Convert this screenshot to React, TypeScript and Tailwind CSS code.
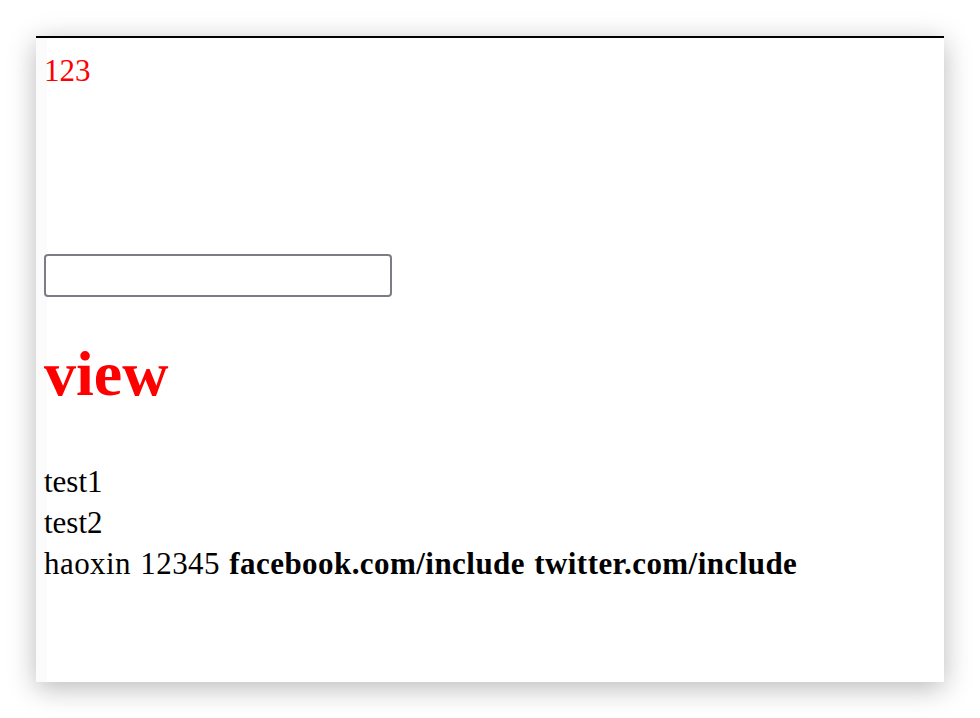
export default function App() {
  return (
    <div className="w-[980px] h-[718px] bg-white pl-[36px] pt-[36px] font-['Liberation_Serif',serif] text-black">
      <div className="w-[908px] h-[646px] bg-[linear-gradient(to_right,#fbfbfb_11px,#ffffff_11px)] border-t-2 border-black shadow-[0_6px_26px_rgba(0,0,0,0.28)] pl-[8px] pt-[12px]">
        <div className="text-[31px] leading-[41px] text-[#ff0000]">123</div>
        <input
          type="text"
          className="mt-[163px] block w-[348px] h-[43px] border-2 border-[#7c7b86] rounded-[4px] bg-white outline-none"
        />
        <h1 className="mt-[41px] text-[64px] leading-[72px] font-bold text-[#ff0000]">view</h1>
        <div className="mt-[51px] text-[31px] leading-[41px]">
          <div>test1</div>
          <div>test2</div>
          <div className="tracking-[0.45px] [word-spacing:1px]">
            haoxin 12345 <b>facebook.com/include</b> <b>twitter.com/include</b>
          </div>
        </div>
      </div>
    </div>
  );
}
